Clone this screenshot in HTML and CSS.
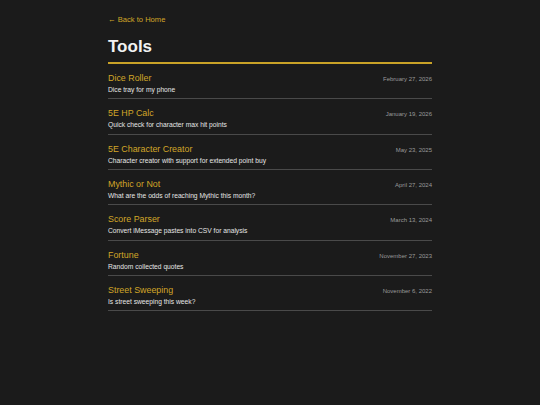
FILE: index.html
```html
<!DOCTYPE html>
<html>
<head>
<meta charset="utf-8">
<link rel="stylesheet" href="styles.css">
</head>
<body>
<main class="page">
  <a class="back" href="#">← Back to Home</a>
  <h1 class="title">Tools</h1>
  <ul class="list">
    <li class="item"><div class="row"><span class="name">Dice Roller</span><span class="date">February 27, 2026</span></div><p class="desc">Dice tray for my phone</p></li>
    <li class="item"><div class="row"><span class="name">5E HP Calc</span><span class="date">January 19, 2026</span></div><p class="desc">Quick check for character max hit points</p></li>
    <li class="item"><div class="row"><span class="name">5E Character Creator</span><span class="date">May 23, 2025</span></div><p class="desc">Character creator with support for extended point buy</p></li>
    <li class="item"><div class="row"><span class="name">Mythic or Not</span><span class="date">April 27, 2024</span></div><p class="desc">What are the odds of reaching Mythic this month?</p></li>
    <li class="item"><div class="row"><span class="name">Score Parser</span><span class="date">March 13, 2024</span></div><p class="desc">Convert iMessage pastes into CSV for analysis</p></li>
    <li class="item"><div class="row"><span class="name">Fortune</span><span class="date">November 27, 2023</span></div><p class="desc">Random collected quotes</p></li>
    <li class="item"><div class="row"><span class="name">Street Sweeping</span><span class="date">November 6, 2022</span></div><p class="desc">Is street sweeping this week?</p></li>
  </ul>
</main>
</body>
</html>
```
FILE: styles.css
```css
html, body {
  margin: 0;
  padding: 0;
  background: #1b1b1b;
}
body {
  font-family: "Liberation Sans", Arial, sans-serif;
  color: #e8e8e8;
}
.page {
  width: 324px;
  margin: 0 auto;
  padding-top: 15px;
}
.back {
  display: block;
  color: #d2a628;
  text-decoration: none;
  font-size: 7.6px;
  line-height: 10px;
}
.title {
  margin: 12px 0 0;
  font-size: 17px;
  line-height: 20px;
  font-weight: bold;
  color: #f2f2f2;
  padding-bottom: 5px;
  border-bottom: 2px solid #c9a227;
}
.list {
  list-style: none;
  margin: 0;
  padding: 0;
}
.item {
  padding-top: 8px;
  padding-bottom: 4.35px;
  border-bottom: 1px solid #4a4a4a;
}
.row {
  display: flex;
  justify-content: space-between;
  align-items: baseline;
  height: 12px;
}
.name {
  color: #d2a628;
  font-size: 8.9px;
  line-height: 12px;
}
.date {
  color: #9a9a9a;
  font-size: 6px;
  line-height: 7px;
}
.desc {
  margin: 1px 0 0;
  font-size: 6.7px;
  line-height: 9px;
  color: #e6e6e6;
}
```
